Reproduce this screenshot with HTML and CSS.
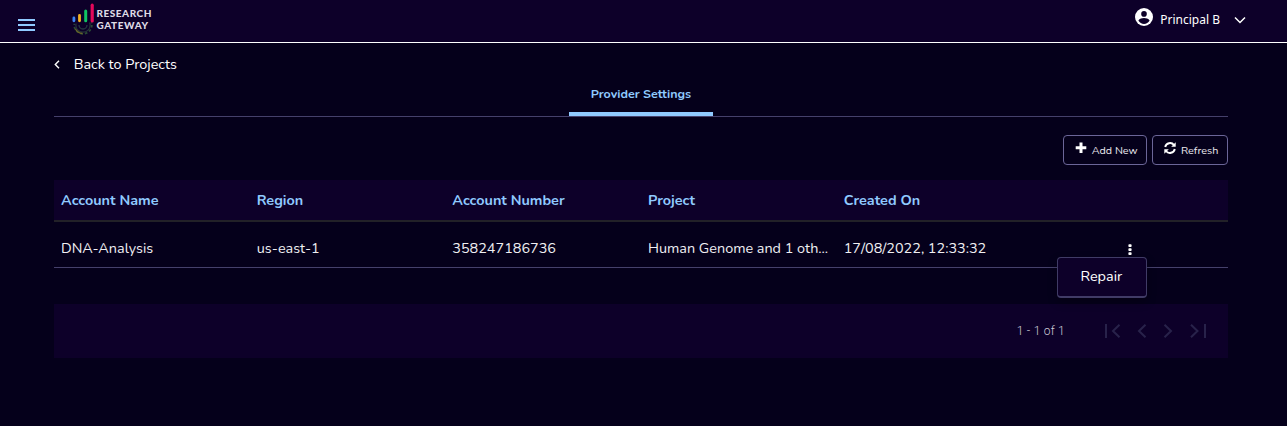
FILE: index.html
```html
<!DOCTYPE html>
<html lang="en">
<head>
<meta charset="utf-8">
<title>Research Gateway</title>
<link rel="stylesheet" href="styles.css">
</head>
<body>
<header class="topbar">
  <svg class="menu" width="17" height="12" viewBox="0 0 17 12"><path d="M0 1h17M0 6h17M0 11h17" stroke="#90caff" stroke-width="2"/></svg>
  <div class="brand">
    <svg class="brand-mark" width="24" height="34" viewBox="0 0 24 34">
      <g fill="none">
        <circle cx="11" cy="22" r="8.800" stroke="#2b4a35" stroke-width="1.800" stroke-dasharray="2.600 2"/>
        <circle cx="11" cy="22" r="7.200" stroke="#26353a" stroke-width="1.200"/>
        <path d="M3.500 26a8.500 8.500 0 0 0 7 4.500" stroke="#6a6428" stroke-width="1.400"/>
        <path d="M7 22a4 4 0 0 0 8 0" stroke="#243a40" stroke-width="1.300"/>
      </g>
      <path d="M0 0h24v19l-24 2z" fill="#0d0029"/>
      <path d="M1.900 15v2.800" stroke="#3c83f4" stroke-width="2.800" stroke-linecap="round"/>
      <path d="M7.500 12.500v5.300" stroke="#f4b321" stroke-width="2.800" stroke-linecap="round"/>
      <path d="M13.700 8v9.800" stroke="#10c463" stroke-width="3" stroke-linecap="round"/>
      <path d="M20.200 2.200v15.800" stroke="#e4085b" stroke-width="3.200" stroke-linecap="round"/>
    </svg>
    <div class="brand-name"><span class="brand-top">RESEARCH</span><span class="brand-bottom">GATEWAY</span></div>
  </div>
  <div class="user">
    <svg width="18" height="18" viewBox="0 0 18 18"><circle cx="9" cy="9" r="9" fill="#fff"/><circle cx="9" cy="5.900" r="2.800" fill="#0d0029"/><path d="M3.400 12.500C4.500 10.500 7 9.900 9 9.900s4.500.6 5.600 2.600C13.300 14.700 11.300 15.900 9 15.900s-4.300-1.200-5.600-3.400z" fill="#0d0029"/></svg>
    <span class="user-name">Principal B</span>
    <svg class="caret" width="12" height="8" viewBox="0 0 12 8"><path d="M1 1.500l5 5 5-5" fill="none" stroke="#fff" stroke-width="1.500"/></svg>
  </div>
</header>
<main class="page">
  <a class="back"><svg width="6" height="9" viewBox="0 0 6 9"><path d="M5 .8L1.300 4.500 5 8.200" fill="none" stroke="#fff" stroke-width="1.400"/></svg><span>Back to Projects</span></a>
  <nav class="tabs"><div class="tab"><span>Provider Settings</span></div></nav>
  <div class="actions">
    <button class="btn"><svg width="12" height="12" viewBox="0 0 12 12"><path d="M6 .5v10.500M.7 5.700h10.600" stroke="#fff" stroke-width="3"/></svg><span>Add New</span></button>
    <button class="btn refresh"><svg width="12" height="12" viewBox="0 0 12 12"><g fill="none" stroke="#fff" stroke-width="1.900"><path d="M1.200 5A5 5 0 0 1 10 3"/><path d="M10.800 7A5 5 0 0 1 2 9"/></g><path d="M11.700.3v4.500H7.200zM.3 11.700V7.200h4.500z" fill="#fff"/></svg><span>Refresh</span></button>
  </div>
  <div class="table">
    <div class="row head">
      <div>Account Name</div><div>Region</div><div>Account Number</div><div>Project</div><div>Created On</div><div></div>
    </div>
    <div class="row body">
      <div>DNA-Analysis</div><div>us-east-1</div><div>358247186736</div><div><span>Human Genome and 1 oth...</span></div><div>17/08/2022, 12:33:32</div>
      <div class="more">
        <svg width="4" height="12" viewBox="0 0 4 12" fill="#fff"><rect x=".4" y=".2" width="3.200" height="2.800" rx=".8"/><rect x=".4" y="4.200" width="3.200" height="2.800" rx=".8"/><rect x=".4" y="8.200" width="3.200" height="2.800" rx=".8"/></svg>
        <div class="popup"><span>Repair</span></div>
      </div>
    </div>
  </div>
  <footer class="pager">
    <span class="range">1 - 1 of 1</span>
    <svg width="102" height="14" viewBox="0 0 102 14" fill="none" stroke="#28224a" stroke-width="2"><path d="M2 0v14M15.500 .7L9 7l6.500 6.300M41.500 .7L35 7l6.500 6.300M60.500 .7L67 7 60.500 13.300M87 .7L93.500 7 87 13.300M101 0v14"/></svg>
  </footer>
</main>
</body>
</html>
```
FILE: styles.css
```css
* { box-sizing: border-box; }
body { margin: 0; height: 426px; overflow: hidden; background: #05001b; color: #fff; font-family: Nunito, "Noto Sans", sans-serif; }
svg { display: block; flex: none; }
span { white-space: nowrap; }
.topbar { height: 43px; display: flex; align-items: flex-start; background: #0d0029; border-bottom: 1px solid #fff; padding: 0 41px 0 18px; }
.menu { margin-top: 19px; }
.brand { display: flex; margin: 3px 0 0 36px; }
.brand-mark { margin-left: .5px; }
.brand-name { display: flex; flex-direction: column; margin: 4px 0 0 1px; font: 900 10px/12px Lato, sans-serif; color: #dedbe5; }
.brand-top { letter-spacing: .53px; }
.brand-bottom { letter-spacing: .58px; }
.user { margin-left: auto; display: flex; align-items: flex-start; padding-top: 8px; }
.user-name { font: 12px/16px "Noto Sans", sans-serif; margin: 4px 0 0 7px; }
.caret { margin: 8px 0 0 14px; }
.page { padding: 0 59px 0 54px; }
.back { display: flex; align-items: center; gap: 13.700px; height: 42px; font-size: 14.4px; }
.tabs { height: 32px; display: flex; justify-content: center; border-bottom: 1px solid #45406b; }
.tab { width: 144px; text-align: center; border-bottom: 4px solid #90caff; color: #90caff; font-weight: 700; font-size: 12.500px; line-height: 18px; }
.actions { display: flex; justify-content: flex-end; gap: 5px; padding-top: 18px; }
.btn { width: 84px; height: 30px; display: flex; align-items: flex-start; gap: 4.700px; padding: 6px 0 0 11px; border: 1px solid #6b6598; border-radius: 4px; background: transparent; color: #eceaf0; font: 10.800px/17px Nunito, "Noto Sans", sans-serif; }
.btn.refresh { width: 76px; gap: 5px; }
.table { margin-top: 15px; }
.row { display: grid; grid-template-columns: repeat(6, 1fr); }
.row > div { padding-left: 7px; min-width: 0; }
.head { height: 42px; background: #0d0029; border-bottom: 2px solid #222128; color: #90caff; font-size: 14.4px; font-weight: 700; line-height: 41px; }
.body { height: 46px; border-bottom: 1px solid #45406b; font-size: 14.4px; line-height: 53px; color: #f0eff3; }
.row > .more { position: relative; padding: 22px 0 0 96px; }
.popup { position: absolute; left: 25px; top: 35px; width: 90px; height: 41px; padding-right: 2px; border: 1px solid #403b66; border-bottom-width: 2px; border-radius: 4px; background: #0d0029; text-align: center; line-height: 37px; color: #fff; box-shadow: 0 4px 10px rgba(0, 0, 0, .25); }
.pager { margin-top: 36px; height: 54px; background: #0d0029; display: flex; align-items: center; justify-content: flex-end; padding-right: 22px; gap: 39px; font: 300 12px/16px Roboto, sans-serif; letter-spacing: .25px; color: #d0cdd8; }
```
